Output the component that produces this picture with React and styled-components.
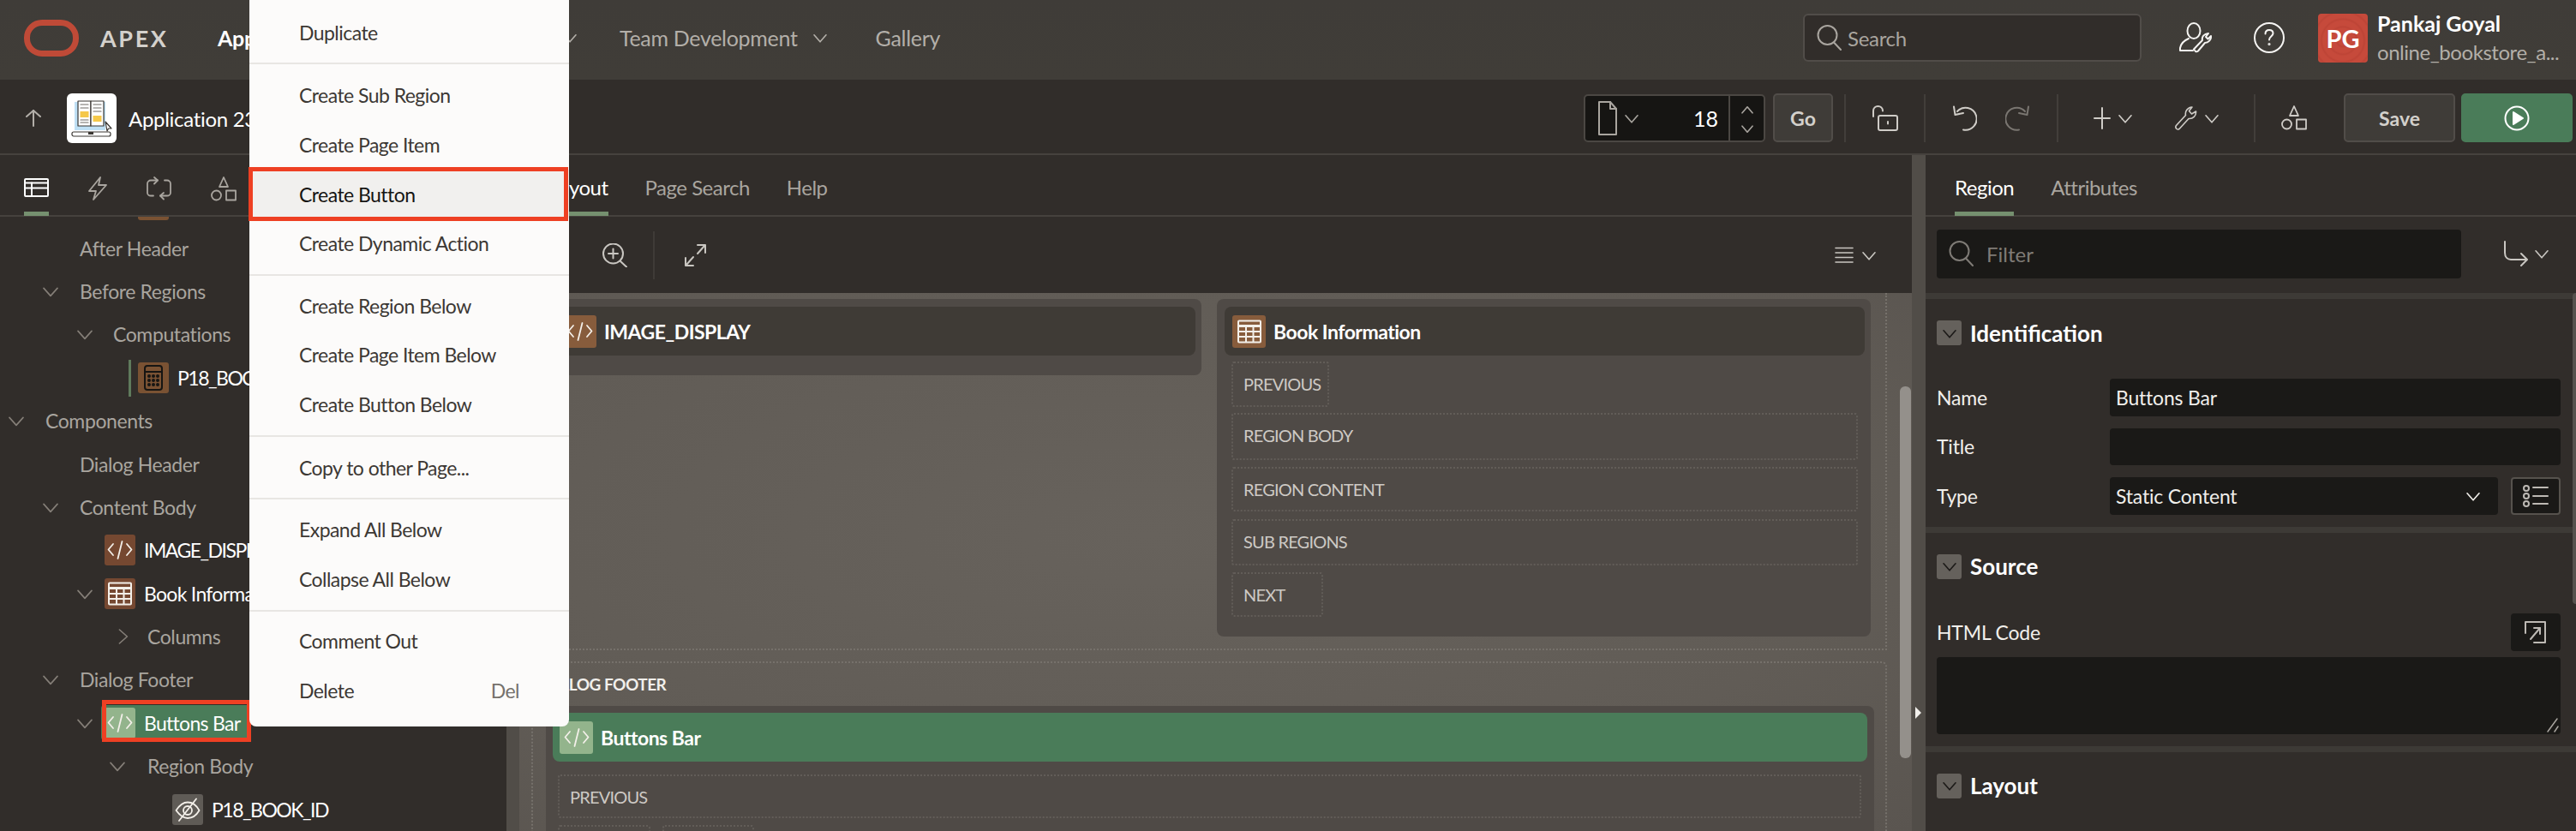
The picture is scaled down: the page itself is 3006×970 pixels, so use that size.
import React from 'react';
import styled, { createGlobalStyle } from 'styled-components';

const GlobalStyle = createGlobalStyle`
   html, body {
      margin: 0;
      padding: 0;
      background: #312d2a;
   }
   * {
      box-sizing: border-box;
   }
`;

/* ---------- icons ---------- */

const Svg = styled.svg.attrs((p) => ({
   viewBox: p.$box || `0 0 ${p.$w} ${p.$h}`,
   width: p.$w,
   height: p.$h,
}))`
   flex: none;
   display: block;
   fill: none;
   stroke: currentColor;
   stroke-width: ${(p) => p.$sw || 2};
   stroke-linecap: round;
   stroke-linejoin: round;
`;

const Chevron = ({ size = 16, dir = 'down' }) => {
   const pts = {
      down: `1,${size * 0.3} ${size / 2},${size * 0.8} ${size - 1},${size * 0.3}`,
      up: `1,${size * 0.7} ${size / 2},${size * 0.2} ${size - 1},${size * 0.7}`,
      right: `${size * 0.3},1 ${size * 0.8},${size / 2} ${size * 0.3},${size - 1}`,
   }[dir];
   return (
      <Svg $w={size} $h={size} $sw={1.6}>
         <polyline points={pts} />
      </Svg>
   );
};

const SearchIcon = ({ w = 30 }) => (
   <Svg $w={w} $h={w} $box="0 0 30 30">
      <ellipse cx="12.5" cy="12" rx="11" ry="11" />
      <line x1="20" y1="20.5" x2="28" y2="29" />
   </Svg>
);

const CodeIcon = () => (
   <Svg $w={30} $h={22} $sw={1.8}>
      <polyline points="7,4 1.5,10.5 7,17" />
      <line x1="17.5" y1="1" x2="12.5" y2="21" />
      <polyline points="23,4 28.5,10.5 23,17" />
   </Svg>
);

const TableIcon = () => (
   <Svg $w={28} $h={28} $sw={2}>
      <rect x="1" y="1.5" width="26" height="25" rx="1" />
      <line x1="1" y1="7.5" x2="27" y2="7.5" strokeWidth="3" />
      <line x1="1" y1="14" x2="27" y2="14" />
      <line x1="1" y1="20" x2="27" y2="20" />
      <line x1="10" y1="7.5" x2="10" y2="26" />
      <line x1="18.5" y1="7.5" x2="18.5" y2="26" />
   </Svg>
);

const CalcIcon = () => (
   <Svg $w={22} $h={30} $sw={2}>
      <rect x="1" y="1" width="20" height="28" rx="3" stroke="#161513" />
      <line x1="1" y1="8" x2="21" y2="8" stroke="#161513" />
      {[6, 11, 16].map((x) =>
         [13, 18, 23].map((y) => <circle key={`${x}${y}`} cx={x} cy={y} r="1" stroke="#161513" />)
      )}
   </Svg>
);

const EyeOffIcon = () => (
   <Svg $w={30} $h={28} $sw={1.8}>
      <path d="M1.5 15 C6 8 11 5.5 15 5.5 C20 5.5 25 8.5 28.5 15 C25 21 20 24 15 24 C10 24 6 21 1.5 15 Z" />
      <circle cx="15" cy="15" r="5" />
      <line x1="25" y1="1.5" x2="5" y2="27" />
   </Svg>
);

const ShapesIcon = ({ w = 30, h = 29 }) => (
   <Svg $w={w} $h={h} $box="0 0 30 29" $sw={1.8}>
      <polygon points="15,1 20,12 10,12" />
      <circle cx="6.5" cy="22" r="5.5" />
      <rect x="18" y="16.5" width="11" height="11" />
   </Svg>
);

const UndoIcon = ({ flip }) => (
   <Svg $w={30} $h={30} style={flip ? { transform: 'scaleX(-1)' } : undefined}>
      <path d="M7 7 A13 13 0 1 1 14 28.5" />
      <polyline points="3,1.5 4.5,11 14,9" />
   </Svg>
);

const WrenchIcon = ({ w = 26, h = 28 }) => (
   <Svg $w={w} $h={h} $box="0 0 26 28" $sw={1.6}>
      <path d="M2 26.5 C0.5 25 0.5 23.8 1.5 22.5 L12.5 10.5 C11.5 6 14.5 1.5 20 1 L16.5 5.5 L19.5 9 L24.5 6 C25 11 21 15 16 14.5 L5.5 26 C4.5 27.3 3 27.3 2 26.5 Z" />
   </Svg>
);

const UserWrench = () => (
   <Svg $w={38} $h={36} $sw={2}>
      <ellipse cx="17" cy="10" rx="7.5" ry="9" />
      <path d="M11 19 C5 21.5 2 25 1 30 L1 33 L16 33" />
      <path d="M19 34 L17 31.5 L27 21 C26 17 29 13.5 34 13 L31 17 L33.5 19.5 L37 16 C37.5 20.5 34 24 30 24 L22 33.5 C21 34.5 20 34.5 19 34 Z" />
   </Svg>
);

const HelpIcon = () => (
   <Svg $w={36} $h={36} $sw={2}>
      <circle cx="18" cy="18" r="17" />
      <path d="M13.5 13.5 C13.5 10.5 15.5 9 18 9 C20.5 9 22.5 10.5 22.5 13 C22.5 16 18 16.5 18 20.5" />
      <circle cx="18" cy="25.5" r="0.6" />
   </Svg>
);

const DocIcon = () => (
   <Svg $w={22} $h={40}>
      <path d="M1 1 H14 L21 9 V39 H1 Z" />
      <polyline points="14,1 14,9 21,9" />
   </Svg>
);

const LockOpen = () => (
   <Svg $w={30} $h={30}>
      <path d="M1 13 V6.5 C1 3 3.5 1 6.5 1 C9.5 1 12 3 12 6.5" />
      <rect x="7" y="12" width="22" height="17" rx="2" />
      <line x1="18" y1="19" x2="18" y2="21.5" />
   </Svg>
);

const PlayCircle = () => (
   <Svg $w={30} $h={30}>
      <circle cx="15" cy="15" r="13.5" />
      <polygon points="11,8 22,15 11,22" fill="currentColor" />
   </Svg>
);

const RenderingIcon = () => (
   <Svg $w={29} $h={22}>
      <rect x="1" y="1" width="27" height="20" rx="1" />
      <line x1="1" y1="5.5" x2="28" y2="5.5" />
      <line x1="1" y1="11.5" x2="28" y2="11.5" />
      <line x1="9" y1="5.5" x2="9" y2="21" />
   </Svg>
);

const BoltIcon = () => (
   <Svg $w={22} $h={28} $sw={1.8}>
      <path d="M14 1 L1 17 H9 L6 27 L21 10 H12 Z" />
   </Svg>
);

const ProcessIcon = () => (
   <Svg $w={29} $h={28} $sw={1.8}>
      <path d="M13 4.5 H5 C3 4.5 1 6 1 8.5 V19 C1 21 3 22.5 5 22.5 H8" />
      <path d="M16 22.5 H24 C26 22.5 28 21 28 19 V8.5 C28 6 26 4.5 24 4.5 H21" />
      <polyline points="9,1 13,4.5 9,8.5" />
      <polyline points="20,19 16,22.5 20,26.5" />
   </Svg>
);

const ZoomIn = () => (
   <Svg $w={29} $h={28}>
      <circle cx="12.5" cy="12" r="11.5" />
      <line x1="12.5" y1="6.5" x2="12.5" y2="17.5" />
      <line x1="7" y1="12" x2="18" y2="12" />
      <line x1="20.5" y1="20.5" x2="28" y2="27.5" />
   </Svg>
);

const ExpandIcon = () => (
   <Svg $w={25} $h={26}>
      <polyline points="15,1 24,1 24,10" />
      <line x1="23" y1="2" x2="15" y2="11" />
      <polyline points="1,16 1,25 10,25" />
      <line x1="2" y1="24" x2="10" y2="15" />
   </Svg>
);

const ListLines = () => (
   <Svg $w={22} $h={19} $sw={1.6}>
      <line x1="1" y1="1.5" x2="21" y2="1.5" />
      <line x1="1" y1="7" x2="21" y2="7" />
      <line x1="1" y1="12.5" x2="21" y2="12.5" />
      <line x1="1" y1="18" x2="21" y2="18" />
   </Svg>
);

const GoToIcon = () => (
   <Svg $w={28} $h={30}>
      <path d="M1 1 V14 C1 19 4 22 8 22 H26" />
      <polyline points="20,15 27,22 20,29" />
   </Svg>
);

const DotList = () => (
   <Svg $w={30} $h={26} $sw={2}>
      <circle cx="4" cy="4" r="3" />
      <circle cx="4" cy="13" r="3" />
      <circle cx="4" cy="22" r="3" />
      <line x1="12" y1="3" x2="29" y2="3" />
      <line x1="12" y1="13" x2="29" y2="13" />
      <line x1="12" y1="22" x2="29" y2="22" />
   </Svg>
);

const OpenExternal = () => (
   <Svg $w={26} $h={26}>
      <path d="M1 14 V1 H24 V25 H11" />
      <polyline points="11,8 18,8 18,15" />
      <line x1="18" y1="8" x2="7" y2="21" />
   </Svg>
);

const PlusIcon = () => (
   <Svg $w={20} $h={28}>
      <line x1="10" y1="2" x2="10" y2="26" />
      <line x1="1" y1="14" x2="19" y2="14" />
   </Svg>
);

const AppGlyph = () => (
   <Svg $w={48} $h={44} $sw={1.2}>
      <rect x="4" y="3" width="36" height="33" fill="#bfe0f5" stroke="none" />
      <path d="M8 2 H23 V31 H8 Z" fill="#fff" stroke="#3a3632" />
      <path d="M23 2 H38 V31 H23 Z" fill="#fff" stroke="#3a3632" />
      {[6, 10, 24, 27].map((y) => (
         <line key={y} x1="11" y1={y} x2="20" y2={y} stroke="#6f6b66" />
      ))}
      {[6, 10, 14].map((y) => (
         <line key={y} x1="26" y1={y} x2="35" y2={y} stroke="#6f6b66" />
      ))}
      <rect x="10.5" y="14" width="10" height="7" fill="#f5c84a" stroke="none" />
      <rect x="25.5" y="19" width="10" height="7" fill="#f5c84a" stroke="none" />
      <rect x="1" y="38" width="45" height="5" rx="2" fill="#fff" stroke="#3a3632" />
      <rect x="20" y="38" width="6" height="3" fill="#3a3632" stroke="none" />
      <path d="M40 26 L47 34 L43.5 34 L42 37 Z" fill="#fff" stroke="#3a3632" />
   </Svg>
);

/* ---------- page ---------- */

const Page = styled.div`
   position: relative;
   width: 3006px;
   height: 970px;
   overflow: hidden;
   display: flex;
   flex-direction: column;
   background: #312d2a;
   color: #fff;
   font-family: Lato, 'Liberation Sans', sans-serif;
`;

/* top bar */

const Header = styled.header`
   flex: none;
   height: 93px;
   display: flex;
   align-items: center;
   padding: 0 18px 5px 28px;
   background: linear-gradient(#3f3c38, #403d38);
`;

const Logo = styled.div`
   flex: none;
   width: 64px;
   height: 43px;
   border: 7px solid #bf4a37;
   border-radius: 21px;
`;

const Brand = styled.div`
   margin-left: 25px;
   width: 137px;
   font-size: 27px;
   font-weight: 700;
   letter-spacing: 2.6px;
   color: #d4d1cc;
`;

const Nav = styled.nav`
   display: flex;
   align-items: center;
   gap: 57px;
`;

const NavItem = styled.div`
   display: flex;
   align-items: center;
   justify-content: space-between;
   width: ${(p) => (p.$w ? `${p.$w}px` : 'auto')};
   gap: 18px;
   font-size: 25px;
   letter-spacing: -0.3px;
   font-weight: ${(p) => (p.$active ? 700 : 400)};
   color: ${(p) => (p.$active ? '#fff' : '#b3afa9')};
   white-space: nowrap;
`;

const HeaderSearch = styled.div`
   margin-left: auto;
   width: 395px;
   height: 56px;
   display: flex;
   align-items: center;
   gap: 6px;
   padding-left: 14px;
   background: #312d2a;
   border: 2px solid #514d49;
   border-radius: 6px;
   font-size: 24px;
   letter-spacing: -0.3px;
   color: #a9a59f;
`;

const HeaderIcon = styled.div`
   margin-left: ${(p) => p.$ml}px;
   color: #f5f4f2;
`;

const Avatar = styled.div`
   flex: none;
   margin-left: 39px;
   width: 58px;
   height: 57px;
   display: flex;
   align-items: center;
   justify-content: center;
   border-radius: 4px;
   background: repeating-radial-gradient(circle at 50% 55%, #c64a3b 0, #c64a3b 5px, #bd4436 7px, #c64a3b 9px);
   font-size: 29px;
   font-weight: 700;
`;

const UserBlock = styled.div`
   margin-left: 11px;
   width: 214px;
   display: flex;
   flex-direction: column;
   gap: 6px;
   white-space: nowrap;
`;

const UserName = styled.div`
   font-size: 25px;
   line-height: 28px;
   font-weight: 700;
`;

const UserSub = styled.div`
   font-size: 24px;
   line-height: 28px;
   letter-spacing: -0.45px;
   color: #b3afa9;
`;

/* application toolbar */

const AppBar = styled.div`
   flex: none;
   height: 88px;
   display: flex;
   align-items: flex-start;
   padding: 16px 4px 0 30px;
   border-bottom: 2px solid #46423e;
`;

const BackArrow = styled.div`
   height: 58px;
   display: flex;
   align-items: center;
   color: #b3afa9;
   width: 48px;
`;

const AppTile = styled.div`
   flex: none;
   width: 58px;
   height: 58px;
   display: flex;
   align-items: center;
   justify-content: center;
   background: #fff;
   border-radius: 6px;
`;

const AppName = styled.div`
   margin-left: 14px;
   height: 58px;
   line-height: 60px;
   font-size: 24px;
   letter-spacing: -0.3px;
   white-space: nowrap;
`;

const BarRight = styled.div`
   margin-left: auto;
   display: flex;
   align-items: center;
   height: 57px;
`;

const PageSelect = styled.div`
   width: 212px;
   height: 56px;
   display: flex;
   align-items: center;
   background: #161513;
   border: 2px solid #4b4743;
   border-radius: 5px;
   color: #a9a59f;
`;

const PageIcon = styled.div`
   display: flex;
   align-items: center;
   gap: 9px;
   padding-left: 15px;
`;

const PageNumber = styled.div`
   flex: 1;
   text-align: right;
   padding-right: 12px;
   font-size: 25px;
   color: #fff;
`;

const Stepper = styled.div`
   width: 41px;
   align-self: stretch;
   display: flex;
   flex-direction: column;
   align-items: center;
   justify-content: space-between;
   padding: 10px 0 7px;
   border-left: 2px solid #4b4743;
`;

const BarButton = styled.div`
   flex: none;
   width: ${(p) => p.$w}px;
   height: 57px;
   margin-left: ${(p) => p.$ml}px;
   display: flex;
   align-items: center;
   justify-content: center;
   border: 2px solid ${(p) => (p.$primary ? '#4a7c59' : '#514d49')};
   border-radius: 5px;
   background: ${(p) => (p.$primary ? '#4a7c59' : '#3f3c38')};
   font-size: 23px;
   font-weight: 700;
   color: ${(p) => (p.$primary ? '#fff' : '#d3d0cb')};
`;

const ToolGroup = styled.div`
   flex: none;
   width: ${(p) => p.$w}px;
   height: 56px;
   margin-left: ${(p) => p.$ml || 0}px;
   display: flex;
   align-items: center;
   justify-content: center;
   gap: ${(p) => p.$gap || 0}px;
   border-left: 2px solid #423e3a;
   color: #cfccc7;
`;

const Dim = styled.span`
   color: #7a7671;
`;

const Combo = styled.div`
   display: flex;
   align-items: center;
   gap: 9px;
`;

/* main area */

const Main = styled.div`
   flex: 1;
   min-height: 0;
   display: flex;
`;

const Splitter = styled.div`
   position: relative;
   flex: none;
   width: ${(p) => p.$w}px;
   background: #514d48;
`;

const SplitArrow = styled.div`
   position: absolute;
   left: 4px;
   top: 644px;
   width: 0;
   height: 0;
   border-left: 7px solid #f1efeb;
   border-top: 7px solid transparent;
   border-bottom: 7px solid transparent;
`;

const TabsRow = styled.div`
   flex: none;
   height: 72px;
   display: flex;
   align-items: flex-end;
   gap: ${(p) => p.$gap || 43}px;
   padding-left: ${(p) => p.$pl || 0}px;
   border-bottom: 2px solid #45413d;
   position: relative;
   background: #312d2a;
   z-index: 1;
`;

const TextTab = styled.div`
   height: 70px;
   padding-top: 22px;
   font-size: 24px;
   letter-spacing: -0.5px;
   line-height: 30px;
   color: ${(p) => (p.$active ? '#fff' : '#a9a59f')};
   border-bottom: 5px solid ${(p) => (p.$active ? '#75906f' : 'transparent')};
   margin-bottom: -1px;
   white-space: nowrap;
`;

const IconTab = styled.div`
   width: ${(p) => p.$w}px;
   height: 70px;
   display: flex;
   justify-content: center;
   padding-top: ${(p) => p.$top}px;
   color: ${(p) => (p.$active ? '#fff' : '#a9a59f')};
   border-bottom: 5px solid ${(p) => (p.$active ? '#75906f' : 'transparent')};
   margin-bottom: -1px;
`;

/* left tree */

const LeftPanel = styled.aside`
   flex: none;
   width: 591px;
   display: flex;
   flex-direction: column;
   overflow: hidden;
`;

const Tree = styled.div`
   margin-top: -39px;
   display: flex;
   flex-direction: column;
`;

const TreeRow = styled.div`
   height: 50.4px;
   display: flex;
   align-items: center;
   padding-left: ${(p) => p.$pl}px;
   font-size: 23px;
   letter-spacing: ${(p) => (p.$caps ? '-1.5px' : p.$strong ? '-0.7px' : '-0.4px')};
   white-space: nowrap;
   color: ${(p) => (p.$strong ? '#fff' : '#a9a59f')};
`;

const TreeToggle = styled.div`
   flex: none;
   width: ${(p) => p.$w || 43}px;
   color: #857f78;
`;

const NodeIcon = styled.div`
   flex: none;
   width: 36px;
   height: 36px;
   margin-right: 10px;
   display: flex;
   align-items: center;
   justify-content: center;
   border-radius: 3px;
   color: #f3efe9;
   background: ${(p) => p.$bg};
`;

const SelectedNode = styled.div`
   position: relative;
   display: flex;
   align-items: center;
   height: 41px;
   padding-right: 12px;
   margin-left: -4px;
   padding-left: 4px;
   border-radius: 4px;
   background: #4a7c59;
   color: #fff;

   &::after {
      content: '';
      position: absolute;
      inset: -6px -1px -2px 1px;
      border: 5px solid #ee4023;
      pointer-events: none;
   }
`;

const LeftBar = styled.div`
   position: relative;
   display: flex;
   align-items: center;

   &::before {
      content: '';
      position: absolute;
      left: -11px;
      top: -3px;
      bottom: -4px;
      width: 3px;
      background: #5f7a5c;
   }
`;

/* centre */

const Center = styled.section`
   flex: 1;
   min-width: 0;
   display: flex;
   flex-direction: column;
`;

const LayoutTools = styled.div`
   flex: none;
   height: 89px;
   display: flex;
   align-items: center;
   padding: 0 42px 0 97px;
   color: #c9c6c1;
`;

const ToolDivider = styled.div`
   width: 2px;
   height: 56px;
   margin: 0 35px 0 30px;
   background: #3f3b37;
`;

const ListMenu = styled.div`
   margin-left: auto;
   display: flex;
   align-items: center;
   gap: 10px;
`;

const Canvas = styled.div`
   position: relative;
   flex: 1;
   min-height: 0;
   overflow: hidden;
   padding: 0 29px 0 14px;
   background: radial-gradient(ellipse at 45% 45%, #67625c 0, #615c56 65%, #5a5550 100%);
`;

const ScrollThumb = styled.div`
   position: absolute;
   right: 1px;
   top: 109px;
   width: 13px;
   height: 434px;
   border-radius: 6px;
   background: #94908b;
`;

const BodyBox = styled.div`
   display: grid;
   grid-template-columns: 760px 763px;
   gap: 18px;
   align-items: start;
   padding: 7px 15px 16px 20px;
   height: 417px;
   border-right: 2px dotted #76716b;
   border-bottom: 2px dotted #76716b;
   border-left: 2px dotted #76716b;
`;

const Region = styled.div`
   padding: 9px 7px ${(p) => p.$pb || 23}px 9px;
   border-radius: 8px;
   background: #4f4a46;
`;

const RegionHead = styled.div`
   height: 57px;
   display: flex;
   align-items: center;
   padding-left: ${(p) => p.$pl || 9}px;
   border-radius: 8px;
   background: ${(p) => (p.$selected ? '#4a7c59' : '#3f3b36')};
   font-size: 23px;
   letter-spacing: -0.5px;
   font-weight: 700;
   white-space: nowrap;
`;

const HeadIcon = styled.div`
   flex: none;
   width: 39px;
   height: 38px;
   margin-right: 9px;
   display: flex;
   align-items: center;
   justify-content: center;
   border-radius: 3px;
   color: #f3efe9;
   background: ${(p) => p.$bg};
`;

const Slot = styled.div`
   width: ${(p) => (p.$w ? `${p.$w}px` : 'auto')};
   height: ${(p) => p.$h || 53}px;
   margin: ${(p) => p.$mt || 8}px ${(p) => p.$mr || 0}px 0 ${(p) => p.$ml || 8}px;
   padding: 11px 0 0 12px;
   font-size: 20px;
   letter-spacing: -0.8px;
   line-height: 26px;
   color: #cdc9c4;
   border: 2px dotted #625d58;
   border-radius: 3px;
`;

const FooterBox = styled.div`
   margin-top: 13px;
   padding: 0 13px 0 15px;
   border: 2px dotted #76716b;
   border-bottom: 0;
   border-radius: 6px 6px 0 0;
`;

const FooterTitle = styled.div`
   height: 50px;
   display: flex;
   align-items: center;
   margin: -1px 0 1px -5px;
   font-size: 19px;
   letter-spacing: -0.5px;
   font-weight: 700;
   color: #f1efeb;
`;

const FooterRegion = styled.div`
   padding: 8px 8px 40px;
   border-radius: 8px 8px 0 0;
   background: #4f4a46;
`;

const SlotRow = styled.div`
   display: flex;
   gap: 12px;
`;

/* right panel */

const RightPanel = styled.aside`
   position: relative;
   flex: none;
   width: 759px;
   display: flex;
   flex-direction: column;
   overflow: hidden;
`;

const FilterRow = styled.div`
   flex: none;
   height: 89px;
   display: flex;
   align-items: center;
   padding: 0 32px 3px 13px;
`;

const FilterBox = styled.div`
   width: 612px;
   height: 57px;
   display: flex;
   align-items: center;
   gap: 14px;
   padding-left: 14px;
   border-radius: 4px;
   background: #1a1917;
   font-size: 24px;
   color: #7f7b76;
`;

const GoTo = styled.div`
   margin-left: auto;
   display: flex;
   align-items: center;
   gap: 8px;
   color: #c9c6c1;
`;

const Section = styled.div`
   padding: 25px 18px 14px 13px;
   border-top: 7px solid #3d3a36;
`;

const SectionHead = styled.div`
   display: flex;
   align-items: center;
   gap: 10px;
   height: 29px;
   font-size: 26px;
   font-weight: 700;
`;

const Toggle = styled.div`
   flex: none;
   width: 29px;
   height: 29px;
   display: flex;
   align-items: center;
   justify-content: center;
   border-radius: 3px;
   background: #65615c;
   color: #1c1a18;
`;

const Fields = styled.div`
   margin-top: 39px;
   display: flex;
   flex-direction: column;
   gap: 14px;
`;

const Field = styled.div`
   display: grid;
   grid-template-columns: 202px 1fr;
   align-items: center;
`;

const FieldLabel = styled.div`
   font-size: 23px;
   letter-spacing: -0.2px;
   color: #f1efeb;
`;

const InputWrap = styled.div`
   display: flex;
   gap: 15px;
`;

const Input = styled.div`
   flex: 1;
   height: 43.5px;
   display: flex;
   align-items: center;
   justify-content: space-between;
   padding: 0 21px 0 7px;
   border-radius: 4px;
   background: #1a1917;
   font-size: 23px;
   letter-spacing: -0.2px;
   color: #f1efeb;
`;

const SquareBtn = styled.div`
   flex: none;
   width: 58px;
   height: ${(p) => (p.$outlined ? '43.5px' : '44px')};
   display: flex;
   align-items: center;
   justify-content: center;
   border: ${(p) => (p.$outlined ? '2px solid #56524d' : '0')};
   border-radius: 4px;
   background: #1a1917;
   color: #bdb9b4;
`;

const CodeHead = styled.div`
   margin-top: 40px;
   display: flex;
   align-items: center;
   justify-content: space-between;
`;

const CodeArea = styled.div`
   position: relative;
   height: 90px;
   margin-top: 7px;
   border-radius: 4px;
   background: #1a1917;
`;

const Grip = styled.div`
   position: absolute;
   right: 2px;
   bottom: 2px;
   color: #a9a59f;
`;

const PanelScroll = styled.div`
   position: absolute;
   right: 0;
   top: 161px;
   width: 4px;
   height: 363px;
   border-radius: 4px 0 0 4px;
   background: #56524e;
`;

/* context menu */

const Menu = styled.div`
   position: absolute;
   left: 291px;
   top: 0;
   z-index: 5;
   width: 373px;
   height: 848px;
   background: #fcfbfa;
   border-radius: 0 0 8px 8px;
   color: #3c3834;
`;

const MenuGroup = styled.div`
   padding: ${(p) => p.$top}px 0 ${(p) => p.$bottom}px;
   border-bottom: ${(p) => (p.$last ? 0 : '2px solid #e8e6e3')};
`;

const MenuItem = styled.div`
   position: relative;
   height: 57.6px;
   display: flex;
   align-items: center;
   justify-content: space-between;
   padding: 0 58px;
   font-size: 23px;
   letter-spacing: -0.55px;
   white-space: nowrap;
   background: ${(p) => (p.$hot ? '#f1f0ee' : 'transparent')};
   color: ${(p) => (p.$hot ? '#161513' : 'inherit')};

   ${(p) =>
      p.$hot &&
      `&::after {
         content: '';
         position: absolute;
         inset: -3px 1px -3px -1px;
         border: 5px solid #ee4023;
      }`}
`;

const Shortcut = styled.span`
   color: #75716c;
`;

const menuGroups = [
   { top: 9, bottom: 6, items: ['Duplicate'] },
   { top: 8, bottom: 7, items: ['Create Sub Region', 'Create Page Item', 'Create Button', 'Create Dynamic Action'] },
   { top: 6, bottom: 7, items: ['Create Region Below', 'Create Page Item Below', 'Create Button Below'] },
   { top: 7, bottom: 7, items: ['Copy to other Page...'] },
   { top: 6, bottom: 7, items: ['Expand All Below', 'Collapse All Below'] },
   { top: 6, bottom: 0, items: ['Comment Out', 'Delete'] },
];

const App = () => {
   return (
      <Page>
         <GlobalStyle />
         <Header>
            <Logo />
            <Brand>APEX</Brand>
            <Nav>
               <NavItem $active $w={166}>
                  App Builder <Chevron />
               </NavItem>
               <NavItem $w={189}>
                  SQL Workshop <Chevron />
               </NavItem>
               <NavItem>
                  Team Development <Chevron />
               </NavItem>
               <NavItem>Gallery</NavItem>
            </Nav>
            <HeaderSearch>
               <SearchIcon />
               Search
            </HeaderSearch>
            <HeaderIcon $ml={44}>
               <UserWrench />
            </HeaderIcon>
            <HeaderIcon $ml={49}>
               <HelpIcon />
            </HeaderIcon>
            <Avatar>PG</Avatar>
            <UserBlock>
               <UserName>Pankaj Goyal</UserName>
               <UserSub>online_bookstore_a...</UserSub>
            </UserBlock>
         </Header>

         <AppBar>
            <BackArrow>
               <Svg $w={18} $h={20}>
                  <line x1="9" y1="1" x2="9" y2="19" />
                  <polyline points="1,8 9,1 17,8" />
               </Svg>
            </BackArrow>
            <AppTile>
               <AppGlyph />
            </AppTile>
            <AppName>Application 231</AppName>
            <BarRight>
               <PageSelect>
                  <PageIcon>
                     <DocIcon />
                     <Chevron />
                  </PageIcon>
                  <PageNumber>18</PageNumber>
                  <Stepper>
                     <Chevron size={14} dir="up" />
                     <Chevron size={14} />
                  </Stepper>
               </PageSelect>
               <BarButton $w={70} $ml={9}>
                  Go
               </BarButton>
               <ToolGroup $w={93} $ml={13}>
                  <LockOpen />
               </ToolGroup>
               <ToolGroup $w={155} $gap={33}>
                  <UndoIcon />
                  <Dim>
                     <UndoIcon flip />
                  </Dim>
               </ToolGroup>
               <ToolGroup $w={230} $gap={50}>
                  <Combo>
                     <PlusIcon />
                     <Chevron />
                  </Combo>
                  <Combo>
                     <WrenchIcon />
                     <Chevron />
                  </Combo>
               </ToolGroup>
               <ToolGroup $w={92}>
                  <ShapesIcon />
               </ToolGroup>
               <BarButton $w={130} $ml={13}>
                  Save
               </BarButton>
               <BarButton $w={130} $ml={7} $primary>
                  <PlayCircle />
               </BarButton>
            </BarRight>
         </AppBar>

         <Main>
            <LeftPanel>
               <TabsRow $pl={28} $gap={46}>
                  <IconTab $active $w={29} $top={26}>
                     <RenderingIcon />
                  </IconTab>
                  <IconTab $w={22} $top={24}>
                     <BoltIcon />
                  </IconTab>
                  <IconTab $w={29} $top={24}>
                     <ProcessIcon />
                  </IconTab>
                  <IconTab $w={30} $top={24}>
                     <ShapesIcon />
                  </IconTab>
               </TabsRow>
               <Tree>
                  <TreeRow $pl={161}>
                     <NodeIcon $bg="#7a5233" />
                  </TreeRow>
                  <TreeRow $pl={93}>After Header</TreeRow>
                  <TreeRow $pl={50}>
                     <TreeToggle>
                        <Chevron size={18} />
                     </TreeToggle>
                     Before Regions
                  </TreeRow>
                  <TreeRow $pl={90}>
                     <TreeToggle $w={42}>
                        <Chevron size={18} />
                     </TreeToggle>
                     Computations
                  </TreeRow>
                  <TreeRow $pl={161} $strong $caps>
                     <LeftBar>
                        <NodeIcon $bg="#7a5233">
                           <CalcIcon />
                        </NodeIcon>
                        P18_BOOK_ID
                     </LeftBar>
                  </TreeRow>
                  <TreeRow $pl={10}>
                     <TreeToggle>
                        <Chevron size={18} />
                     </TreeToggle>
                     Components
                  </TreeRow>
                  <TreeRow $pl={93}>Dialog Header</TreeRow>
                  <TreeRow $pl={50}>
                     <TreeToggle>
                        <Chevron size={18} />
                     </TreeToggle>
                     Content Body
                  </TreeRow>
                  <TreeRow $pl={122} $strong $caps>
                     <NodeIcon $bg="#754831">
                        <CodeIcon />
                     </NodeIcon>
                     IMAGE_DISPLAY
                  </TreeRow>
                  <TreeRow $pl={90} $strong>
                     <TreeToggle $w={32}>
                        <Chevron size={18} />
                     </TreeToggle>
                     <NodeIcon $bg="#754831">
                        <TableIcon />
                     </NodeIcon>
                     Book Information
                  </TreeRow>
                  <TreeRow $pl={134}>
                     <TreeToggle $w={38}>
                        <Chevron size={18} dir="right" />
                     </TreeToggle>
                     Columns
                  </TreeRow>
                  <TreeRow $pl={50}>
                     <TreeToggle>
                        <Chevron size={18} />
                     </TreeToggle>
                     Dialog Footer
                  </TreeRow>
                  <TreeRow $pl={90} $strong>
                     <TreeToggle $w={32}>
                        <Chevron size={18} />
                     </TreeToggle>
                     <SelectedNode>
                        <NodeIcon $bg="#93b48c">
                           <CodeIcon />
                        </NodeIcon>
                        Buttons Bar
                     </SelectedNode>
                  </TreeRow>
                  <TreeRow $pl={128}>
                     <TreeToggle $w={44}>
                        <Chevron size={18} />
                     </TreeToggle>
                     Region Body
                  </TreeRow>
                  <TreeRow $pl={201} $strong $caps>
                     <NodeIcon $bg="#5f5b56">
                        <EyeOffIcon />
                     </NodeIcon>
                     P18_BOOK_ID
                  </TreeRow>
               </Tree>
            </LeftPanel>

            <Splitter $w={15} />

            <Center>
               <TabsRow $pl={35} $gap={43}>
                  <TextTab $active>Layout</TextTab>
                  <TextTab>Page Search</TextTab>
                  <TextTab>Help</TextTab>
               </TabsRow>
               <LayoutTools>
                  <ZoomIn />
                  <ToolDivider />
                  <ExpandIcon />
                  <ListMenu>
                     <ListLines />
                     <Chevron />
                  </ListMenu>
               </LayoutTools>
               <Canvas>
                  <BodyBox>
                     <Region>
                        <RegionHead $pl={6}>
                           <HeadIcon $bg="#875c3c">
                              <CodeIcon />
                           </HeadIcon>
                           IMAGE_DISPLAY
                        </RegionHead>
                     </Region>
                     <Region>
                        <RegionHead>
                           <HeadIcon $bg="#875c3c">
                              <TableIcon />
                           </HeadIcon>
                           Book Information
                        </RegionHead>
                        <Slot $w={114} $mt={7}>
                           PREVIOUS
                        </Slot>
                        <Slot $h={55} $mt={7} $mr={8}>
                           REGION BODY
                        </Slot>
                        <Slot $h={52} $mr={8}>
                           REGION CONTENT
                        </Slot>
                        <Slot $h={54} $mt={9} $mr={8}>
                           SUB REGIONS
                        </Slot>
                        <Slot $w={107} $h={52}>
                           NEXT
                        </Slot>
                     </Region>
                  </BodyBox>
                  <FooterBox>
                     <FooterTitle>DIALOG FOOTER</FooterTitle>
                     <FooterRegion>
                        <RegionHead $selected $pl={8}>
                           <HeadIcon $bg="#93b48c">
                              <CodeIcon />
                           </HeadIcon>
                           Buttons Bar
                        </RegionHead>
                        <Slot $h={51} $mt={15} $ml={6} $mr={7}>
                           PREVIOUS
                        </Slot>
                        <SlotRow>
                           <Slot $w={108} $mt={8} $ml={6} />
                           <Slot $w={107} $mt={8} $ml={2} />
                        </SlotRow>
                     </FooterRegion>
                  </FooterBox>
                  <ScrollThumb />
               </Canvas>
            </Center>

            <Splitter $w={16}>
               <SplitArrow />
            </Splitter>

            <RightPanel>
               <TabsRow $pl={34} $gap={43}>
                  <TextTab $active>Region</TextTab>
                  <TextTab>Attributes</TextTab>
               </TabsRow>
               <FilterRow>
                  <FilterBox>
                     <SearchIcon />
                     Filter
                  </FilterBox>
                  <GoTo>
                     <GoToIcon />
                     <Chevron />
                  </GoTo>
               </FilterRow>
               <Section>
                  <SectionHead>
                     <Toggle>
                        <Chevron />
                     </Toggle>
                     Identification
                  </SectionHead>
                  <Fields>
                     <Field>
                        <FieldLabel>Name</FieldLabel>
                        <Input>Buttons Bar</Input>
                     </Field>
                     <Field>
                        <FieldLabel>Title</FieldLabel>
                        <Input />
                     </Field>
                     <Field>
                        <FieldLabel>Type</FieldLabel>
                        <InputWrap>
                           <Input>
                              Static Content
                              <Chevron />
                           </Input>
                           <SquareBtn $outlined>
                              <DotList />
                           </SquareBtn>
                        </InputWrap>
                     </Field>
                  </Fields>
               </Section>
               <Section>
                  <SectionHead>
                     <Toggle>
                        <Chevron />
                     </Toggle>
                     Source
                  </SectionHead>
                  <CodeHead>
                     <FieldLabel>HTML Code</FieldLabel>
                     <SquareBtn>
                        <OpenExternal />
                     </SquareBtn>
                  </CodeHead>
                  <CodeArea>
                     <Grip>
                        <Svg $w={14} $h={18} $sw={1.5}>
                           <line x1="1" y1="17" x2="12" y2="2" />
                           <line x1="9" y1="17" x2="13" y2="11" />
                        </Svg>
                     </Grip>
                  </CodeArea>
               </Section>
               <Section>
                  <SectionHead>
                     <Toggle>
                        <Chevron />
                     </Toggle>
                     Layout
                  </SectionHead>
               </Section>
               <PanelScroll />
            </RightPanel>
         </Main>

         <Menu>
            {menuGroups.map((group, i) => (
               <MenuGroup
                  key={group.items[0]}
                  $top={group.top}
                  $bottom={group.bottom}
                  $last={i === menuGroups.length - 1}
               >
                  {group.items.map((label) => (
                     <MenuItem key={label} $hot={label === 'Create Button'}>
                        {label}
                        {label === 'Delete' && <Shortcut>Del</Shortcut>}
                     </MenuItem>
                  ))}
               </MenuGroup>
            ))}
         </Menu>
      </Page>
   );
};

export default App;
